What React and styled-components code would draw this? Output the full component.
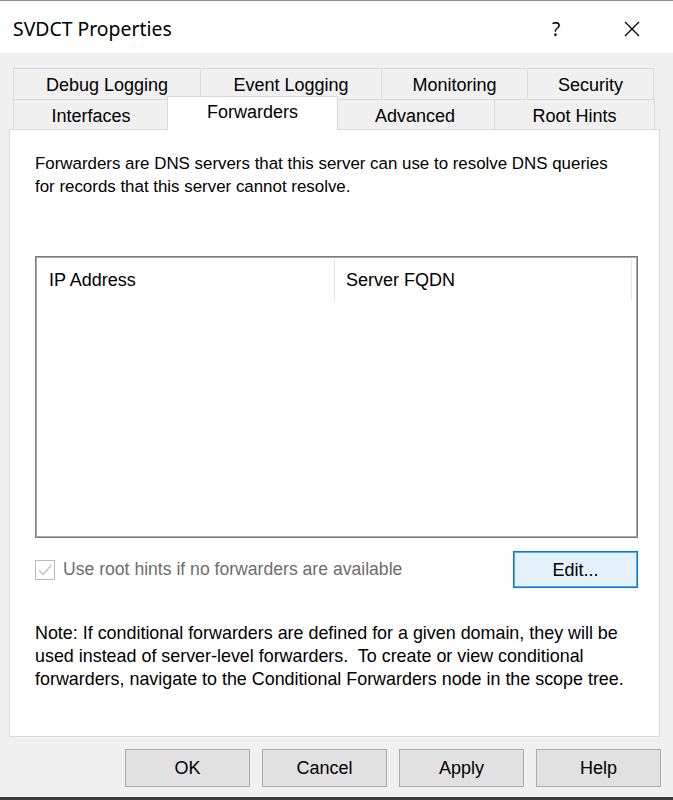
import React from 'react';
import styled, { createGlobalStyle } from 'styled-components';

const GlobalStyle = createGlobalStyle`
  html, body {
    margin: 0;
    padding: 0;
    background: #3a3a3a;
  }
  * {
    box-sizing: border-box;
  }
`;

const Window = styled.div`
  width: 673px;
  height: 797px;
  background: #f0f0f0;
  border-top: 1px solid #8c8c8c;
  display: flex;
  flex-direction: column;
  overflow: hidden;
  font-family: "Liberation Sans", Arial, sans-serif;
  font-size: 18px;
  color: #000;
`;

const TitleBar = styled.div`
  height: 52px;
  background: #fff;
  display: flex;
  align-items: center;
  padding-left: 13px;
  flex-shrink: 0;
`;

const Title = styled.div`
  flex: 1;
  font-family: "Noto Sans", "Open Sans", sans-serif;
  font-size: 19.4px;
  padding-top: 3px;
`;

const CaptionButtons = styled.div`
  display: flex;
  gap: 6px;
  padding-right: 6px;
  height: 100%;
`;

const CaptionButton = styled.div`
  width: 70px;
  height: 100%;
  display: flex;
  align-items: center;
  justify-content: center;
  font-family: "Noto Sans", sans-serif;
  font-size: 19px;
  padding-top: 3px;
`;

const TabStrip = styled.div`
  margin: 15px 0 0 13px;
  width: 644px;
  display: flex;
  flex-direction: column;
`;

const TabRow = styled.div`
  display: flex;
  height: ${p => p.$height}px;
  position: relative;
`;

const Tab = styled.div`
  width: ${p => p.$width}px;
  flex-shrink: 0;
  display: flex;
  align-items: center;
  justify-content: center;
  border: 1px solid #d9d9d9;
  border-bottom: none;
  margin-left: -1px;
  background: #f0f0f0;
  padding-top: 3px;

  &:first-child {
    margin-left: 0;
  }
`;

const ActiveTab = styled(Tab)`
  position: relative;
  z-index: 2;
  background: #fff;
  margin: -3px -2px -1px -2px;
  width: ${p => p.$width + 4}px;
  padding-top: 0;
  padding-bottom: 2px;
`;

const Panel = styled.div`
  margin-left: 9px;
  width: 651px;
  height: 608px;
  background: #fff;
  border: 1px solid #d9d9d9;
  padding: 22px 0 0 25px;
  flex-shrink: 0;
`;

const Paragraph = styled.p`
  margin: 0;
  line-height: 23px;
  white-space: pre;
  font-size: ${p => p.$size || 17}px;
`;

const ListView = styled.div`
  margin-top: 58px;
  width: 603px;
  height: 282px;
  border: 1px solid #7a7a7a;
  box-shadow: inset 0 0 0 1px #a8a8a8;
  padding: 2px;
  background: #fff;
`;

const ListHeader = styled.div`
  display: flex;
  height: 41px;
`;

const HeaderCell = styled.div`
  width: ${p => p.$width}px;
  border-right: 1px solid #e5e5e5;
  display: flex;
  align-items: center;
  padding: 1px 0 0 11px;
`;

const OptionRow = styled.div`
  margin-top: 13px;
  width: 603px;
  display: flex;
  align-items: center;
  justify-content: space-between;
`;

const CheckLabel = styled.label`
  display: flex;
  align-items: center;
  gap: 8px;
  color: #6d6d6d;
  font-size: 17.6px;
`;

const CheckBox = styled.span`
  width: 20px;
  height: 20px;
  border: 1px solid #bcbcbc;
  background: #fff;
  display: flex;
  align-items: center;
  justify-content: center;
`;

const Button = styled.button`
  width: ${p => p.$width || 125}px;
  height: ${p => p.$height || 38}px;
  font-family: "Liberation Sans", Arial, sans-serif;
  font-size: 18px;
  color: #000;
  background: ${p => (p.$focused ? '#e5f1fb' : '#e1e1e1')};
  border: 1px solid ${p => (p.$focused ? '#0078d7' : '#adadad')};
  box-shadow: ${p => (p.$focused ? 'inset 0 0 0 1px #5fa8e6' : 'none')};
  padding: 1px 0 0;
  margin: 0;
`;

const Note = styled(Paragraph)`
  margin-top: 34px;
`;

const Footer = styled.div`
  display: flex;
  justify-content: flex-end;
  gap: 12px;
  padding: 12px 12px 0 0;
`;

const CloseIcon = () => (
  <svg width="16" height="16" viewBox="0 0 16 16">
    <path d="M1 1 L15 15 M15 1 L1 15" stroke="#000" strokeWidth="1.3" fill="none" />
  </svg>
);

const CheckMark = () => (
  <svg width="16" height="14" viewBox="0 0 16 14">
    <polyline points="2,7 6,11.5 14.5,2" stroke="#c2c2c2" strokeWidth="1.3" fill="none" />
  </svg>
);

const topTabs = [
  { label: 'Debug Logging', width: 188 },
  { label: 'Event Logging', width: 182 },
  { label: 'Monitoring', width: 147 },
  { label: 'Security', width: 127 },
];

const bottomTabs = [
  { label: 'Interfaces', width: 156 },
  { label: 'Forwarders', width: 167, active: true },
  { label: 'Advanced', width: 160 },
  { label: 'Root Hints', width: 161 },
];

export default function App() {
  return (
    <>
      <GlobalStyle />
      <Window>
        <TitleBar>
          <Title>SVDCT Properties</Title>
          <CaptionButtons>
            <CaptionButton>?</CaptionButton>
            <CaptionButton><CloseIcon /></CaptionButton>
          </CaptionButtons>
        </TitleBar>

        <TabStrip>
          <TabRow $height={31}>
            {topTabs.map(t => (
              <Tab key={t.label} $width={t.width}>{t.label}</Tab>
            ))}
          </TabRow>
          <TabRow $height={30}>
            {bottomTabs.map(t =>
              t.active ? (
                <ActiveTab key={t.label} $width={t.width}>{t.label}</ActiveTab>
              ) : (
                <Tab key={t.label} $width={t.width}>{t.label}</Tab>
              )
            )}
          </TabRow>
        </TabStrip>

        <Panel>
          <Paragraph $size={16.9}>
            {'Forwarders are DNS servers that this server can use to resolve DNS queries\nfor records that this server cannot resolve.'}
          </Paragraph>

          <ListView>
            <ListHeader>
              <HeaderCell $width={297}>IP Address</HeaderCell>
              <HeaderCell $width={297}>Server FQDN</HeaderCell>
            </ListHeader>
          </ListView>

          <OptionRow>
            <CheckLabel>
              <CheckBox><CheckMark /></CheckBox>
              Use root hints if no forwarders are available
            </CheckLabel>
            <Button $focused $width={125} $height={37}>Edit...</Button>
          </OptionRow>

          <Note $size={17.9}>
            {'Note: If conditional forwarders are defined for a given domain, they will be\nused instead of server-level forwarders.  To create or view conditional\nforwarders, navigate to the Conditional Forwarders node in the scope tree.'}
          </Note>
        </Panel>

        <Footer>
          <Button>OK</Button>
          <Button>Cancel</Button>
          <Button>Apply</Button>
          <Button>Help</Button>
        </Footer>
      </Window>
    </>
  );
}
